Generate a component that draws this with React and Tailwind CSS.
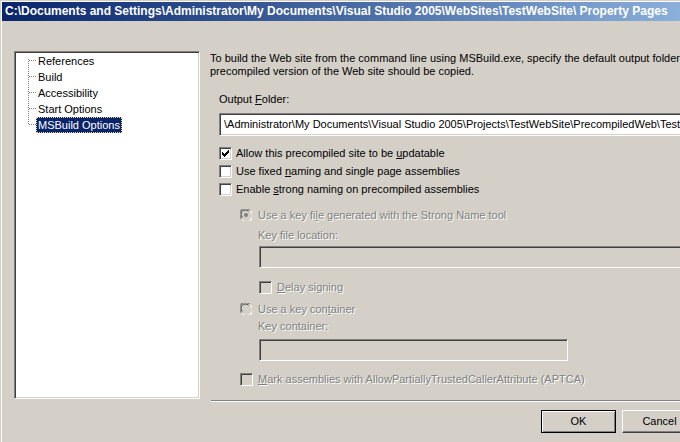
import React from "react";

const sunken =
  "border border-t-[#808080] border-l-[#808080] border-b-white border-r-white shadow-[inset_1px_1px_0_#404040,inset_-1px_-1px_0_#d4d0c8]";
const dim = "text-[#808080] [text-shadow:1px_1px_0_#fff]";

const treeItems = ["References", "Build", "Accessibility", "Start Options", "MSBuild Options"];

const Check = ({ checked, disabled }) => (
  <div className={`w-[13px] h-[13px] shrink-0 ${sunken} ${disabled ? "bg-[#d4d0c8]" : "bg-white"}`}>
    {checked && (
      <svg width="11" height="11" viewBox="0 0 11 11" shapeRendering="crispEdges">
        <path
          d="M2 4h1v3h-1z M3 5h1v3h-1z M4 6h1v3h-1z M5 5h1v3h-1z M6 4h1v3h-1z M7 3h1v3h-1z M8 2h1v3h-1z"
          fill="#000"
        />
      </svg>
    )}
  </div>
);

const Radio = ({ checked }) => (
  <svg width="12" height="12" viewBox="0 0 12 12" className="shrink-0">
    <circle cx="6" cy="6" r="5.5" fill="#d4d0c8" />
    <path d="M1.2 9.5 A5.3 5.3 0 0 1 9.5 1.2" stroke="#808080" strokeWidth="1.2" fill="none" />
    <path d="M2.3 8.5 A4.2 4.2 0 0 1 8.5 2.3" stroke="#404040" strokeWidth="1" fill="none" />
    <path d="M10.8 2.5 A5.3 5.3 0 0 1 2.5 10.8" stroke="#fff" strokeWidth="1.2" fill="none" />
    {checked && <circle cx="6" cy="6" r="2" fill="#808080" />}
  </svg>
);

const Row = ({ children, className = "" }) => (
  <div className={`h-[18px] flex items-center whitespace-nowrap ${className}`}>{children}</div>
);

export default function App() {
  return (
    <div className="w-[680px] h-[442px] overflow-hidden bg-[#d4d0c8] pt-px pl-px font-['Liberation_Sans',Arial,sans-serif] text-[11px] text-black">
      <div className="h-full border-l border-t border-white">
        {/* title bar */}
        <div className="h-[19px] w-[800px] bg-gradient-to-r from-[#0a246a] to-[#a6caf0] pl-[3px] text-white font-bold text-[12px] leading-[19px] whitespace-nowrap">
          {"C:\\Documents and Settings\\Administrator\\My Documents\\Visual Studio 2005\\WebSites\\TestWebSite\\ Property Pages"}
        </div>

        <div className="flex pl-[12px] pt-[30px]">
          {/* tree */}
          <div className={`relative w-[186px] h-[348px] shrink-0 bg-white ${sunken}`}>
            <svg className="absolute left-0 top-0" width="30" height="80" shapeRendering="crispEdges">
              <line x1="13.5" y1="7" x2="13.5" y2="73" stroke="#808080" strokeDasharray="1 1" />
              {[8, 24, 40, 56, 72].map((y) => (
                <line key={y} x1="14" y1={y + 0.5} x2="22" y2={y + 0.5} stroke="#808080" strokeDasharray="1 1" />
              ))}
            </svg>
            <div className="pt-px pl-[21px]">
              {treeItems.map((t, i) => (
                <div key={t} className="h-[16px] flex items-center whitespace-nowrap">
                  {i === 4 ? (
                    <span className="h-[16px] leading-[14px] px-px bg-[#0a246a] text-white border border-dotted border-[#f0d890]">
                      {t}
                    </span>
                  ) : (
                    <span className="px-[2px]">{t}</span>
                  )}
                </div>
              ))}
            </div>
          </div>

          {/* right pane */}
          <div className="ml-[10px] w-[600px] shrink-0">
            <div className="mt-px leading-[13px] whitespace-nowrap">
              <div>To build the Web site from the command line using MSBuild.exe, specify the default output folder where the</div>
              <div>precompiled version of the Web site should be copied.</div>
            </div>

            <div className="pl-[9px]">
              <div className="mt-[15px] leading-[13px]">
                Output <u>F</u>older:
              </div>
              <div className={`mt-[7px] h-[23px] w-[500px] bg-white ${sunken} pl-[4px] flex items-center whitespace-nowrap`}>
                {"\\Administrator\\My Documents\\Visual Studio 2005\\Projects\\TestWebSite\\PrecompiledWeb\\TestWebSite"}
              </div>

              <div className="mt-[8px]">
                <Row>
                  <Check checked />
                  <span className="ml-[4px]">Allow this precompiled site to be <u>u</u>pdatable</span>
                </Row>
                <Row>
                  <Check />
                  <span className="ml-[4px]">Use fixed <u>n</u>aming and single page assemblies</span>
                </Row>
                <Row>
                  <Check />
                  <span className="ml-[4px]">Enable <u>s</u>trong naming on precompiled assemblies</span>
                </Row>
              </div>

              <div className="pl-[21px]">
                <Row className="mt-[8px]">
                  <Radio checked />
                  <span className={`ml-[6px] ${dim}`}>Use a key fi<u>l</u>e generated with the Strong Name tool</span>
                </Row>
                <div className="pl-[18px]">
                  <div className={`mt-[5px] leading-[13px] ${dim}`}>Key file location:</div>
                  <div className={`mt-[4px] ml-px h-[22px] w-[500px] bg-[#d4d0c8] ${sunken}`} />
                  <Row className="mt-[10px] pl-px">
                    <Check disabled />
                    <span className={`ml-[5px] ${dim}`}>
                      <u>D</u>elay signing
                    </span>
                  </Row>
                </div>
                <Row className="mt-[4px]">
                  <Radio />
                  <span className={`ml-[6px] ${dim}`}>Use a key con<u>t</u>ainer</span>
                </Row>
                <div className="pl-[18px]">
                  <div className={`mt-[2px] leading-[13px] ${dim}`}>Key container:</div>
                  <div className={`mt-[6px] ml-px h-[22px] w-[309px] bg-[#d4d0c8] ${sunken}`} />
                </div>
                <Row className="mt-[9px]">
                  <Check disabled />
                  <span className={`ml-[5px] ${dim}`}>
                    <u>M</u>ark assemblies with AllowPartiallyTrustedCallerAttribute (APTCA)
                  </span>
                </Row>
              </div>
            </div>

            <div className="mt-[12px] ml-px h-[2px] border-t border-b border-t-[#808080] border-b-white" />

            <div className="mt-[8px] flex pl-[331px] gap-[6px]">
              <button className="w-[75px] h-[23px] bg-[#d4d0c8] border border-black shadow-[inset_1px_1px_0_#fff,inset_-1px_-1px_0_#808080] text-[11px]">
                OK
              </button>
              <button className="w-[75px] h-[23px] bg-[#d4d0c8] border border-t-white border-l-white border-b-[#404040] border-r-[#404040] shadow-[inset_-1px_-1px_0_#808080] text-[11px]">
                Cancel
              </button>
            </div>
          </div>
        </div>
      </div>
    </div>
  );
}
